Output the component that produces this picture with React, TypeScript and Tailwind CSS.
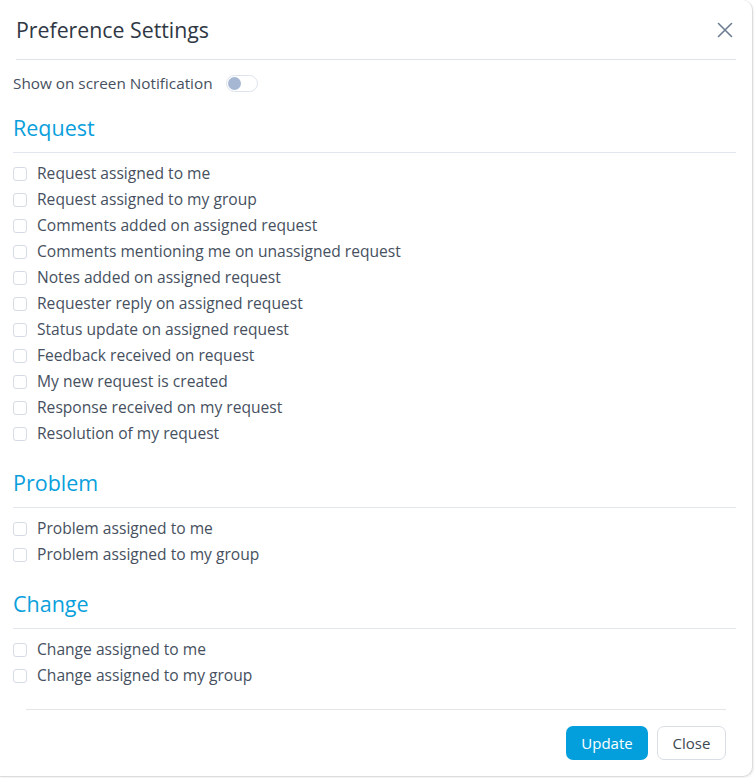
import React from "react";

const request = [
  "Request assigned to me",
  "Request assigned to my group",
  "Comments added on assigned request",
  "Comments mentioning me on unassigned request",
  "Notes added on assigned request",
  "Requester reply on assigned request",
  "Status update on assigned request",
  "Feedback received on request",
  "My new request is created",
  "Response received on my request",
  "Resolution of my request",
];
const problem = ["Problem assigned to me", "Problem assigned to my group"];
const change = ["Change assigned to me", "Change assigned to my group"];

function Row({ label }: { label: string }) {
  return (
    <label className="flex h-[26px] items-center">
      <span className="box-border h-[14px] w-[14px] rounded-[3px] border border-[#d6dce5] bg-white" />
      <span className="ml-[10px] text-[15.6px] text-[#465060]">{label}</span>
    </label>
  );
}

function Section({ title, items, gap }: { title: string; items: string[]; gap: string }) {
  return (
    <div className={gap}>
      <div className="border-b border-[#e1e6ee] pb-[10px] text-[21.5px] leading-[28px] font-medium text-[#0a9fdc]">
        {title}
      </div>
      <div className="mt-[8px] flex flex-col">
        {items.map((i) => (
          <Row key={i} label={i} />
        ))}
      </div>
    </div>
  );
}

export default function App() {
  return (
    <div
      className="h-[778px] w-[756px] bg-white"
      style={{ fontFamily: "'Open Sans', 'Noto Sans', sans-serif" }}
    >
      <div className="relative flex h-[777px] w-[753px] flex-col rounded-r-[10px] border-r border-b border-[#dcdcdc] bg-white shadow-[1px_1px_2px_rgba(0,0,0,0.06)]">
        <div className="mx-4 flex h-[60px] items-center justify-between border-b border-[#dfe3ea]">
          <span className="text-[21.3px] font-medium text-[#2f3744]">Preference Settings</span>
          <svg width="16" height="16" viewBox="0 0 16 16" className="mr-[3px]">
            <path d="M1.5 1.5 L14.5 14.5 M14.5 1.5 L1.5 14.5" stroke="#6b7c93" strokeWidth="1.6" strokeLinecap="round" />
          </svg>
        </div>
        <div className="pl-[13px] pr-[16px]">
          <div className="mt-[13px] flex h-[20px] items-center">
            <span className="text-[15.3px] text-[#465060]">Show on screen Notification</span>
            <span className="ml-[13px] box-border flex h-[17px] w-[32px] items-center rounded-full border border-[#dde3ec] bg-white pl-[1px]">
              <span className="h-[13px] w-[13px] rounded-full bg-[#a6b7d3]" />
            </span>
          </div>
          <Section title="Request" items={request} gap="mt-[21px]" />
          <Section title="Problem" items={problem} gap="mt-[22px]" />
          <Section title="Change" items={change} gap="mt-[22px]" />
        </div>
        <div className="mx-[26px] mt-[20px] border-t border-[#e5e5e5]" />
        <div className="mr-[26px] mt-[16px] flex justify-end gap-[9px]">
          <button className="h-[34px] w-[82px] rounded-[7px] bg-[#039fdd] text-[15px] text-white">Update</button>
          <button className="box-border h-[34px] w-[69px] rounded-[7px] border border-[#d9dee6] bg-white text-[15px] text-[#3d4852]">
            Close
          </button>
        </div>
      </div>
    </div>
  );
}
